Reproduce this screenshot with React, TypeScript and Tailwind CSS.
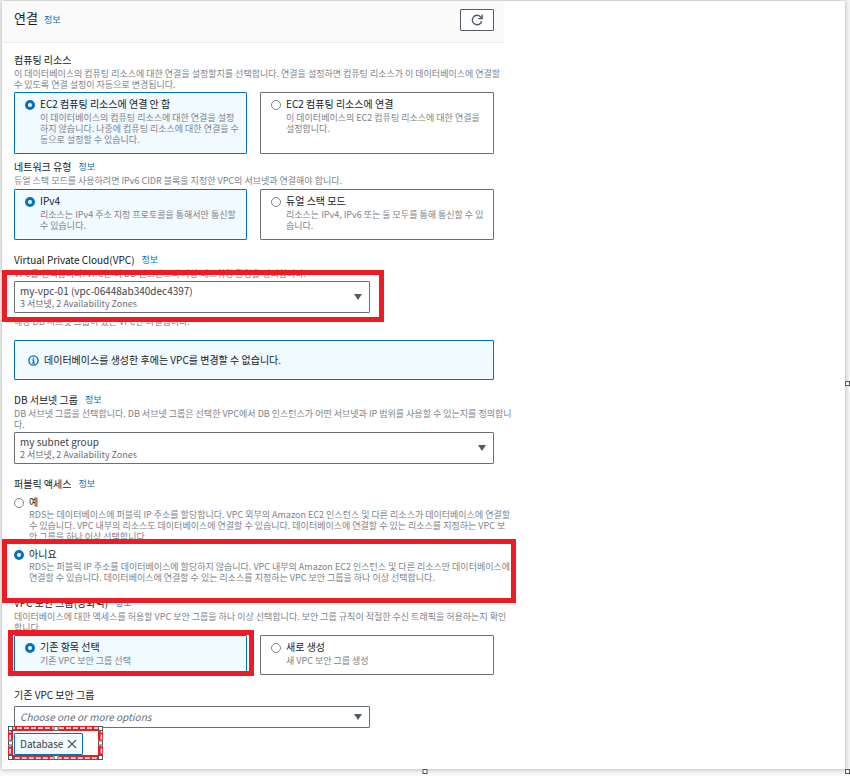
import { useState, type ReactNode } from "react";

const fontStack = "font-['Noto_Sans_CJK_KR',sans-serif]";

function InfoLink() {
  return (
    <a href="#info" className="text-[9px] leading-[14px] text-[#0073bb] hover:underline">
      정보
    </a>
  );
}

function Heading({ id, children, info }: { id?: string; children: ReactNode; info?: boolean }) {
  return (
    <div className="flex items-center gap-[7px] text-[10px] leading-[14px] text-[#16191f]">
      <h3 id={id}>{children}</h3>
      {info && <InfoLink />}
    </div>
  );
}

function Hint({ children }: { children: ReactNode }) {
  return <p className="mt-px text-[9px] leading-[11px] whitespace-pre text-[#7d848b]">{children}</p>;
}

// Radio input, checked state is a thick blue ring
function Radio({ name, checked, onChange }: { name: string; checked: boolean; onChange: () => void }) {
  return (
    <input
      type="radio"
      name={name}
      checked={checked}
      onChange={onChange}
      className="mt-[3px] size-[10px] shrink-0 appearance-none rounded-full border border-[#7d848b] bg-white checked:border-[3px] checked:border-[#0073bb]"
    />
  );
}

type Option = { title: string; text: string };

function Tiles({ name, options, marked }: { name: string; options: Option[]; marked?: boolean }) {
  const [selected, setSelected] = useState(0);

  return (
    <div className="grid grid-cols-[233fr_234fr] gap-[13px]">
      {options.map((o, i) => (
        <div key={o.title} className="relative flex">
          <label
            className={`flex flex-1 gap-[5px] rounded-[1px] border pt-1 pr-1 pb-2 pl-[10px] ${
              selected === i ? "border-[#0073bb] bg-[#f1faff]" : "border-[#687078] bg-white"
            }`}
          >
            <Radio name={name} checked={selected === i} onChange={() => setSelected(i)} />
            <span className="min-w-0 flex-1">
              <span className="block text-[10px] leading-[14px] text-[#16191f]">{o.title}</span>
              <span className="mt-px block text-[9px] leading-[11px] whitespace-pre text-[#7d848b]">{o.text}</span>
            </span>
          </label>
          {marked && i === 0 && (
            <div className="pointer-events-none absolute -top-[5px] -right-[7px] -bottom-px -left-[6px] border-[5px] border-[#ed1c24]" />
          )}
        </div>
      ))}
    </div>
  );
}

function Caret() {
  return (
    <svg viewBox="0 0 8 6" className="pointer-events-none absolute top-1/2 right-2 h-[6px] w-2 -translate-y-1/2 fill-[#545b64]">
      <path d="M0 0h8L4 6z" />
    </svg>
  );
}

function Dropdown({ label, value, detail }: { label: string; value: string; detail: string }) {
  return (
    <div className="relative">
      <select
        aria-label={label}
        className="block h-8 w-full appearance-none rounded-[1px] border border-[#687078] bg-white pr-6 pb-3 pl-[5px] text-[10px] leading-[14px] text-[#3d4249]"
      >
        <option>{value}</option>
      </select>
      <span className="pointer-events-none absolute bottom-[3px] left-[6px] text-[9px] leading-[12px] text-[#687078]">{detail}</span>
      <Caret />
    </div>
  );
}

// Small square grips around a selected shape
function Grip({ className }: { className: string }) {
  return <span className={`absolute size-[5px] border border-[#555] bg-white ${className}`} />;
}

function SelectedMark() {
  return (
    <div className="pointer-events-none absolute -top-[7px] -right-5 -bottom-[5px] -left-[6px] border-[5px] border-[#ed1c24]">
      <div className="absolute -inset-[3px]">
        <svg className="block size-full overflow-visible fill-none">
          <rect width="100%" height="100%" className="stroke-[#555]" />
          <rect width="100%" height="100%" className="stroke-white stroke-[1.5]" strokeDasharray="5 2" />
        </svg>
      </div>
      <Grip className="-top-[5px] -left-[5px]" />
      <Grip className="-top-[5px] left-1/2 -translate-x-1/2" />
      <Grip className="-top-[5px] -right-[5px]" />
      <Grip className="top-1/2 -left-[5px] -translate-y-1/2" />
      <Grip className="top-1/2 -right-[5px] -translate-y-1/2" />
      <Grip className="-bottom-[5px] -left-[5px]" />
      <Grip className="-bottom-[5px] left-1/2 -translate-x-1/2" />
      <Grip className="-right-[5px] -bottom-[5px]" />
    </div>
  );
}

function PublicAccess() {
  const [open, setOpen] = useState(false);

  return (
    <div role="radiogroup" aria-labelledby="public-access">
      <label className="mt-1 flex gap-[5px]">
        <Radio name="public" checked={open} onChange={() => setOpen(true)} />
        <span className="min-w-0 flex-1">
          <span className="block text-[10px] leading-[14px] text-[#16191f]">예</span>
          <span className="block text-[9px] leading-[11px] whitespace-pre text-[#7d848b]">
            {"RDS는 데이터베이스에 퍼블릭 IP 주소를 할당합니다. VPC 외부의 Amazon EC2 인스턴스 및 다른 리소스가 데이터베이스에 연결할\n수 있습니다. VPC 내부의 리소스도 데이터베이스에 연결할 수 있습니다. 데이터베이스에 연결할 수 있는 리소스를 지정하는 VPC 보\n안 그룹을 하나 이상 선택합니다."}
          </span>
        </span>
      </label>
      <div className="relative mt-[5px]">
        <label className="flex gap-[5px]">
          <Radio name="public" checked={!open} onChange={() => setOpen(false)} />
          <span className="min-w-0 flex-1">
            <span className="block text-[10px] leading-[14px] text-[#16191f]">아니요</span>
            <span className="block text-[9px] leading-[11px] whitespace-pre text-[#7d848b]">
              {"RDS는 퍼블릭 IP 주소를 데이터베이스에 할당하지 않습니다. VPC 내부의 Amazon EC2 인스턴스 및 다른 리소스만 데이터베이스에\n연결할 수 있습니다. 데이터베이스에 연결할 수 있는 리소스를 지정하는 VPC 보안 그룹을 하나 이상 선택합니다."}
            </span>
          </span>
        </label>
        <div className="pointer-events-none absolute -top-2 -right-[22px] -bottom-5 -left-3 border-[5px] border-[#ed1c24]" />
      </div>
    </div>
  );
}

export default function App() {
  return (
    <div className={`relative bg-[#fafafa] pt-px pr-[5px] pb-[7px] pl-0.5 ${fontStack}`}>
      <main className="bg-white shadow-[0_0_5px_1px_rgba(0,0,0,0.25)]">
        <div className="w-full max-w-[502px]">
          {/* Header */}
          <header className="flex h-[42px] items-start justify-between border-b border-[#eaeded] bg-[#fafafa] pt-2 pr-[10px] pl-3">
            <div className="flex items-end gap-1.5">
              <h2 className="text-[13px] leading-[18px] text-[#16191f]">연결</h2>
              <InfoLink />
            </div>
            <button
              type="button"
              aria-label="새로 고침"
              className="flex h-[22px] w-[34px] items-center justify-center rounded-[1px] border border-[#545b64] bg-white"
            >
              <svg viewBox="0 0 12 12" className="size-3 fill-none stroke-[#545b64] stroke-[1.4]">
                <path d="M10.6 7.2A4.7 4.7 0 1 1 9.6 2.9L10.8 4.2M11.1 .6v4H7.2" />
              </svg>
            </button>
          </header>

          <div className="pt-[10px] pr-[10px] pb-[14px] pl-3">
            {/* Compute */}
            <section>
              <Heading>컴퓨팅 리소스</Heading>
              <Hint>
                {"이 데이터베이스의 컴퓨팅 리소스에 대한 연결을 설정할지를 선택합니다. 연결을 설정하면 컴퓨팅 리소스가 이 데이터베이스에 연결할\n수 있도록 연결 설정이 자동으로 변경됩니다."}
              </Hint>
              <div className="mt-0.5">
                <Tiles
                  name="compute"
                  options={[
                    {
                      title: "EC2 컴퓨팅 리소스에 연결 안 함",
                      text: "이 데이터베이스의 컴퓨팅 리소스에 대한 연결을 설정\n하지 않습니다. 나중에 컴퓨팅 리소스에 대한 연결을 수\n동으로 설정할 수 있습니다.",
                    },
                    {
                      title: "EC2 컴퓨팅 리소스에 연결",
                      text: "이 데이터베이스의 EC2 컴퓨팅 리소스에 대한 연결을\n설정합니다.",
                    },
                  ]}
                />
              </div>
            </section>

            {/* Network type */}
            <section className="mt-1.5">
              <Heading info>네트워크 유형</Heading>
              <Hint>듀얼 스택 모드를 사용하려면 IPv6 CIDR 블록을 지정한 VPC의 서브넷과 연결해야 합니다.</Hint>
              <div className="mt-[3px]">
                <Tiles
                  name="network"
                  options={[
                    { title: "IPv4", text: "리소스는 IPv4 주소 지정 프로토콜을 통해서만 통신할\n수 있습니다." },
                    { title: "듀얼 스택 모드", text: "리소스는 IPv4, IPv6 또는 둘 모두를 통해 통신할 수 있\n습니다." },
                  ]}
                />
              </div>
            </section>

            {/* VPC */}
            <section className="mt-[13px]">
              <Heading info>Virtual Private Cloud(VPC)</Heading>
              <Hint>VPC를 선택합니다. VPC는 이 DB 인스턴스의 가상 네트워킹 환경을 정의합니다.</Hint>
              <div className="relative mt-0.5 w-full max-w-[356px]">
                <Dropdown label="VPC" value="my-vpc-01 (vpc-06448ab340dec4397)" detail="3 서브넷, 2 Availability Zones" />
                <div className="pointer-events-none absolute -top-[11px] -right-[14px] -bottom-[9px] -left-3 border-[5px] border-[#ed1c24]" />
              </div>
              <div className="pt-0.5">
                <Hint>해당 DB 서브넷 그룹이 있는 VPC만 나열됩니다.</Hint>
              </div>
            </section>

            <div className="mt-[13px] flex h-10 items-center gap-[5px] rounded-[1px] border border-[#0073bb] bg-[#f1faff] px-[13px] text-[10px] leading-[14px] text-[#16191f]">
              <svg viewBox="0 0 12 12" className="size-[11px] fill-none stroke-[#0073bb] stroke-[1.5]">
                <circle cx="6" cy="6" r="5" />
                <path d="M4.8 5.5H6V8.8M4.6 8.8h2.9M6 2.8v1.4" />
              </svg>
              <p>데이터베이스를 생성한 후에는 VPC를 변경할 수 없습니다.</p>
            </div>

            {/* Subnet group */}
            <section className="mt-[13px]">
              <Heading info>DB 서브넷 그룹</Heading>
              <Hint>
                {"DB 서브넷 그룹을 선택합니다. DB 서브넷 그룹은 선택한 VPC에서 DB 인스턴스가 어떤 서브넷과 IP 범위를 사용할 수 있는지를 정의합니\n다."}
              </Hint>
              <div className="mt-0.5">
                <Dropdown label="DB 서브넷 그룹" value="my subnet group" detail="2 서브넷, 2 Availability Zones" />
              </div>
            </section>

            {/* Public access */}
            <section className="mt-[13px]">
              <Heading id="public-access" info>
                퍼블릭 액세스
              </Heading>
              <PublicAccess />
            </section>

            {/* Security group */}
            <section className="mt-[13px]">
              <Heading info>VPC 보안 그룹(방화벽)</Heading>
              <Hint>
                {"데이터베이스에 대한 액세스를 허용할 VPC 보안 그룹을 하나 이상 선택합니다. 보안 그룹 규칙이 적절한 수신 트래픽을 허용하는지 확인\n합니다."}
              </Hint>
              <div className="mt-0.5">
                <Tiles
                  name="security"
                  marked
                  options={[
                    { title: "기존 항목 선택", text: "기존 VPC 보안 그룹 선택" },
                    { title: "새로 생성", text: "새 VPC 보안 그룹 생성" },
                  ]}
                />
              </div>
            </section>

            <section className="mt-[13px]">
              <Heading>기존 VPC 보안 그룹</Heading>
              <div className="relative mt-1 w-full max-w-[356px]">
                <select
                  aria-label="기존 VPC 보안 그룹"
                  className="block h-[22px] w-full appearance-none rounded-[1px] border border-[#687078] bg-white pr-6 pl-[5px] text-[10px] leading-[14px] text-[#687078] italic"
                >
                  <option>Choose one or more options</option>
                </select>
                <Caret />
              </div>
              <div className="relative mt-[5px] w-fit">
                <div className="flex h-[22px] items-center gap-1 rounded-[1px] border border-[#0073bb] bg-[#f1faff] px-[5px] text-[10px] leading-[14px] text-[#3d4249]">
                  <span>Database</span>
                  <button type="button" aria-label="Database 제거">
                    <svg viewBox="0 0 10 10" className="size-[10px] fill-none stroke-[#545b64] stroke-[1.3]">
                      <path d="M1 1l8 8M9 1L1 9" />
                    </svg>
                  </button>
                </div>
                <SelectedMark />
              </div>
            </section>
          </div>
        </div>
      </main>

      {/* Canvas grips */}
      <Grip className="top-[381px] right-0" />
      <Grip className="bottom-0.5 left-1/2 -translate-x-1/2" />
      <Grip className="right-0 bottom-0.5" />
    </div>
  );
}
